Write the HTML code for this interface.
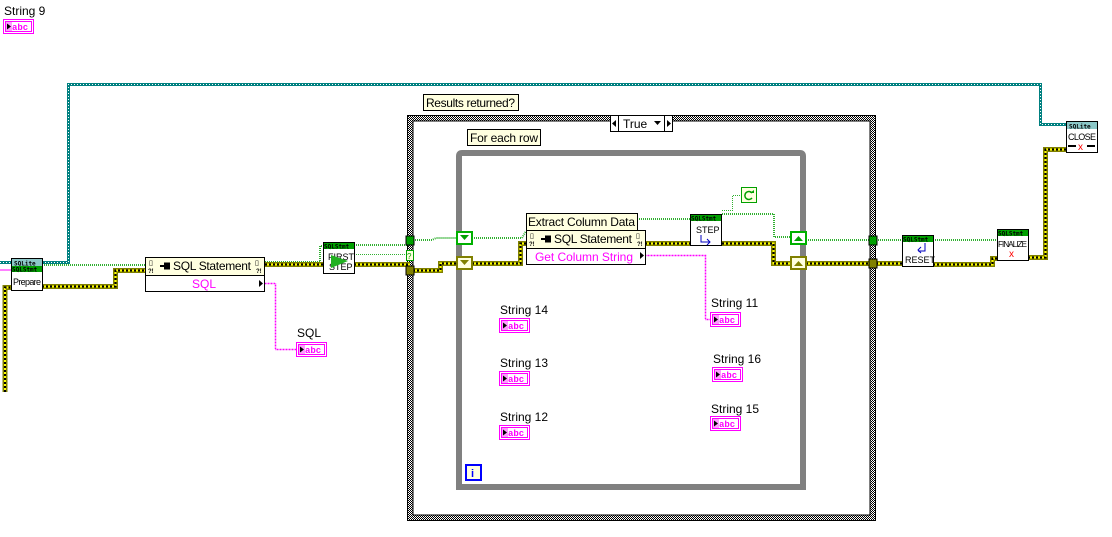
<!DOCTYPE html>
<html><head><meta charset="utf-8"><style>
html,body{margin:0;padding:0;background:#fff;width:1112px;height:537px;overflow:hidden}
svg{display:block;font-family:"Liberation Sans","DejaVu Sans",sans-serif}
.t{font-size:12px;fill:#000}
.s{font-size:6px;font-family:"DejaVu Sans Mono",monospace;font-weight:bold}
</style></head><body>
<svg width="1112" height="537" viewBox="0 0 1112 537" xmlns="http://www.w3.org/2000/svg">
<defs>
<pattern id="chk" width="2" height="2" patternUnits="userSpaceOnUse"><rect width="2" height="2" fill="#fff"/><rect width="1" height="1" fill="#000"/><rect x="1" y="1" width="1" height="1" fill="#000"/></pattern>
<path id="ew" d="M5 392 V287.5 H11 M42 286.5 H115.5 V270.5 H145 M265 264.5 H323 M354 264.5 H410 M413 270.5 H440.5 V263.5 H457 M472 263.5 H520.5 V243.5 H526 M645 243.5 H690 M722 243.5 H773.5 V263.5 H790 M806 263.5 H869 M876 263.5 H902 M933 264.5 H992.5 V258.5 H997 M1028 257.5 H1045.5 V149.5 H1066"/>
<path id="tw" d="M0 262.5 H68.5 V84.5 H1040.5 V124.5 H1068"/>
</defs>

<!-- Case structure -->
<rect x="407" y="115" width="469" height="406" fill="url(#chk)"/>
<rect x="407.5" y="115.5" width="468" height="405" fill="none" stroke="#000"/>
<rect x="413" y="121" width="457" height="394" fill="#fff" stroke="#000"/>
<rect x="610.5" y="115.5" width="62" height="16" fill="#fff" stroke="#000"/>
<line x1="618.5" y1="116" x2="618.5" y2="131" stroke="#000"/><line x1="664.5" y1="116" x2="664.5" y2="131" stroke="#000"/>
<path d="M616 120 L612 123.5 L616 127Z M667 120 L671 123.5 L667 127Z M654 121 h7 l-3.5 4z"/>
<text class="t" x="623" y="128">True</text>
<rect x="423.5" y="94.5" width="95" height="16" fill="#ffffe0" stroke="#000"/>
<text class="t" x="426" y="107" textLength="89">Results returned?</text>

<!-- While loop -->
<path d="M459 490 V156 Q459 153 462 153 H800 Q803 153 803 156 V487" fill="none" stroke="#808080" stroke-width="6"/>
<path d="M459 487 H806" stroke="#808080" stroke-width="6"/>
<rect x="467.5" y="129.5" width="73" height="16" fill="#ffffe0" stroke="#000"/>
<text class="t" x="470" y="142" textLength="68">For each row</text>
<rect x="466" y="465" width="15" height="15" fill="#ffffe0" stroke="#0000ff" stroke-width="2"/>
<text x="471" y="477" font-size="11" font-weight="bold" fill="#0000ff">i</text>

<!-- teal wire -->
<g fill="none">
<use href="#tw" stroke="#008080" stroke-width="3"/>
<use href="#tw" stroke="#fff" stroke-width="1" stroke-dasharray="1 2"/>
<path d="M0 270 H11" stroke="#ff00ff" stroke-width="1"/>
<path d="M265 283.5 H275.5 V349.5 H297" stroke="#ff00ff" stroke-width="1.5" stroke-dasharray="1 0.5"/>
<path d="M645 255.5 H705.5 V319.5 H711" stroke="#ff00ff" stroke-width="1.5" stroke-dasharray="1 0.5"/>
</g>

<!-- green refnum wires -->
<g fill="none" stroke="#30b030" stroke-width="2" stroke-dasharray="1 1">
<path d="M42 265 H145"/>
<path d="M265 262 H320 V246 H323"/>
<path d="M354 245 H410"/>
<path d="M354 254.5 H406" stroke-width="1"/>
<path d="M413 240 H432 L436 238 H457"/>
<path d="M472 238 H522 L526 231"/>
<path d="M637 219 H690"/>
<path d="M722 214 H774 V237 H790"/>
<path d="M806 240 H869"/>
<path d="M876 240 H902"/>
<path d="M933 240 H997"/>
<path d="M722 210.5 H732.5 V195.5 H741" stroke-width="1"/>
</g>

<!-- yellow error wires -->
<g fill="none">
<use href="#ew" stroke="#808000" stroke-width="5"/>
<use href="#ew" stroke="#ffff00" stroke-width="2"/>
<use href="#ew" stroke="#000" stroke-width="2" stroke-dasharray="2 2"/>
</g>

<!-- String 9 -->
<text class="t" x="4" y="15">String 9</text>
<g transform="translate(3,19)"><rect x="0.5" y="0.5" width="30" height="14" fill="#fff" stroke="#f0f"/><rect x="2.5" y="2.5" width="26" height="10" fill="none" stroke="#f0f"/><rect x="3" y="3" width="6" height="9" fill="#ff9bff"/><path d="M4 4.5 L8 7.5 L4 10.5Z"/><text x="9" y="11" font-size="9" font-weight="bold" fill="#f0f" font-family="Liberation Mono,monospace">abc</text></g>

<!-- Prepare node -->
<rect x="11.5" y="258.5" width="31" height="32" fill="#fff" stroke="#000"/>
<rect x="12" y="259" width="30" height="7" fill="#8cc8c8"/>
<text class="s" x="14" y="265.5">SQLite</text>
<rect x="12" y="266" width="30" height="6" fill="#00a000"/>
<text class="s" x="12" y="271.5">SQLStmt</text>
<text x="13" y="285" font-size="9" textLength="28">Prepare</text>

<!-- SQL Statement node 1 -->
<rect x="145.5" y="257.5" width="119" height="34" fill="#fff" stroke="#000"/>
<rect x="146" y="258" width="118" height="17" fill="#ffffe0"/>
<line x1="146" y1="275.5" x2="264" y2="275.5" stroke="#000"/>
<text x="149" y="265" font-size="7">▯</text><text x="148" y="273" font-size="6" font-weight="bold">?!</text>
<text x="255" y="265" font-size="7">▯</text><text x="256" y="273" font-size="6" font-weight="bold">?!</text>
<path d="M160 266 h5 M165 263.5 h4 v5 h-4z" stroke="#000" stroke-width="2" fill="#000"/>
<text class="t" x="173" y="270" textLength="78">SQL Statement</text>
<text x="192" y="288" font-size="12" fill="#ff00ff">SQL</text>
<path d="M259 280 L263 283.5 L259 287Z"/>

<text class="t" x="297" y="337">SQL</text>
<g transform="translate(296,342)"><rect x="0.5" y="0.5" width="30" height="14" fill="#fff" stroke="#f0f"/><rect x="2.5" y="2.5" width="26" height="10" fill="none" stroke="#f0f"/><rect x="3" y="3" width="6" height="9" fill="#ff9bff"/><path d="M4 4.5 L8 7.5 L4 10.5Z"/><text x="9" y="11" font-size="9" font-weight="bold" fill="#f0f" font-family="Liberation Mono,monospace">abc</text></g>

<!-- FIRST STEP node -->
<rect x="323.5" y="242.5" width="31" height="31" fill="#fff" stroke="#000"/>
<rect x="324" y="243" width="30" height="6" fill="#00a000"/>
<text class="s" x="324" y="248.5">SQLStmt</text>
<text x="328" y="260" font-size="9">FIRST</text>
<text x="329" y="270" font-size="9">STEP</text>
<path d="M331 255 L348 261 L331 268Z" fill="#20b020"/>

<!-- tunnels -->
<rect x="406" y="236" width="8" height="9" fill="#00a000" stroke="#000"/>
<rect x="406.5" y="250.5" width="7" height="10" fill="#ffffe0" stroke="#00a000"/>
<text x="407" y="259" font-size="8" fill="#00a000">?</text>
<rect x="406" y="266" width="8" height="9" fill="#808000" stroke="#000"/>
<rect x="869" y="236" width="8" height="9" fill="#00a000" stroke="#000"/>
<rect x="869" y="259" width="8" height="9" fill="#808000" stroke="#000"/>

<!-- shift registers -->
<rect x="457" y="232" width="15" height="12" fill="#fff" stroke="#00b000" stroke-width="2"/><path d="M460 235 h9 l-4.5 5z" fill="#00a000"/>
<rect x="457" y="257" width="15" height="12" fill="#ffffe0" stroke="#808000" stroke-width="2"/><path d="M460 260 h9 l-4.5 5z" fill="#808000"/>
<rect x="791" y="232" width="15" height="12" fill="#fff" stroke="#00b000" stroke-width="2"/><path d="M794 241 h9 l-4.5 -5z" fill="#00a000"/>
<rect x="791" y="257" width="15" height="12" fill="#ffffe0" stroke="#808000" stroke-width="2"/><path d="M794 266 h9 l-4.5 -5z" fill="#808000"/>

<!-- Extract column data -->
<rect x="526.5" y="213.5" width="111" height="17" fill="#ffffe0" stroke="#000"/>
<text class="t" x="528" y="226" textLength="107">Extract Column Data</text>
<rect x="526.5" y="230.5" width="119" height="34" fill="#fff" stroke="#000"/>
<rect x="527" y="231" width="118" height="17" fill="#ffffe0"/>
<line x1="527" y1="248.5" x2="645" y2="248.5" stroke="#000"/>
<text x="530" y="238" font-size="7">▯</text><text x="529" y="246" font-size="6" font-weight="bold">?!</text>
<text x="636" y="238" font-size="7">▯</text><text x="637" y="246" font-size="6" font-weight="bold">?!</text>
<path d="M541 239 h5 M546 236.5 h4 v5 h-4z" stroke="#000" stroke-width="2" fill="#000"/>
<text class="t" x="554" y="243" textLength="78">SQL Statement</text>
<text x="535" y="261" font-size="12" fill="#ff00ff" textLength="98">Get Column String</text>
<path d="M640 252 L644 255.5 L640 259Z"/>

<!-- STEP node -->
<rect x="690.5" y="214.5" width="31" height="31" fill="#fff" stroke="#000"/>
<rect x="691" y="215" width="30" height="6" fill="#00a000"/>
<text class="s" x="691" y="220.5">SQLStmt</text>
<text x="696" y="233" font-size="9">STEP</text>
<path d="M701 235 V242 H710 M707 239 L710 242 L707 245" fill="none" stroke="#0000c0"/>
<rect x="741.5" y="187.5" width="15" height="15" fill="#ffffe0" stroke="#00a000"/>
<path d="M752 193 A4 4 0 1 0 752 198" fill="none" stroke="#00a000" stroke-width="1.5"/><path d="M750 193 h4 v-3z" fill="#00a000"/>

<!-- strings -->
<g font-size="12">
<text x="500" y="314">String 14</text>
<text x="500" y="367">String 13</text>
<text x="500" y="421">String 12</text>
<text x="711" y="307">String 11</text>
<text x="713" y="363">String 16</text>
<text x="711" y="413">String 15</text>
</g>
<g transform="translate(499,318)"><rect x="0.5" y="0.5" width="30" height="14" fill="#fff" stroke="#f0f"/><rect x="2.5" y="2.5" width="26" height="10" fill="none" stroke="#f0f"/><rect x="3" y="3" width="6" height="9" fill="#ff9bff"/><path d="M4 4.5 L8 7.5 L4 10.5Z"/><text x="9" y="11" font-size="9" font-weight="bold" fill="#f0f" font-family="Liberation Mono,monospace">abc</text></g>
<g transform="translate(499,371)"><rect x="0.5" y="0.5" width="30" height="14" fill="#fff" stroke="#f0f"/><rect x="2.5" y="2.5" width="26" height="10" fill="none" stroke="#f0f"/><rect x="3" y="3" width="6" height="9" fill="#ff9bff"/><path d="M4 4.5 L8 7.5 L4 10.5Z"/><text x="9" y="11" font-size="9" font-weight="bold" fill="#f0f" font-family="Liberation Mono,monospace">abc</text></g>
<g transform="translate(499,425)"><rect x="0.5" y="0.5" width="30" height="14" fill="#fff" stroke="#f0f"/><rect x="2.5" y="2.5" width="26" height="10" fill="none" stroke="#f0f"/><rect x="3" y="3" width="6" height="9" fill="#ff9bff"/><path d="M4 4.5 L8 7.5 L4 10.5Z"/><text x="9" y="11" font-size="9" font-weight="bold" fill="#f0f" font-family="Liberation Mono,monospace">abc</text></g>
<g transform="translate(710,312)"><rect x="0.5" y="0.5" width="30" height="14" fill="#fff" stroke="#f0f"/><rect x="2.5" y="2.5" width="26" height="10" fill="none" stroke="#f0f"/><rect x="3" y="3" width="6" height="9" fill="#ff9bff"/><path d="M4 4.5 L8 7.5 L4 10.5Z"/><text x="9" y="11" font-size="9" font-weight="bold" fill="#f0f" font-family="Liberation Mono,monospace">abc</text></g>
<g transform="translate(712,367)"><rect x="0.5" y="0.5" width="30" height="14" fill="#fff" stroke="#f0f"/><rect x="2.5" y="2.5" width="26" height="10" fill="none" stroke="#f0f"/><rect x="3" y="3" width="6" height="9" fill="#ff9bff"/><path d="M4 4.5 L8 7.5 L4 10.5Z"/><text x="9" y="11" font-size="9" font-weight="bold" fill="#f0f" font-family="Liberation Mono,monospace">abc</text></g>
<g transform="translate(710,416)"><rect x="0.5" y="0.5" width="30" height="14" fill="#fff" stroke="#f0f"/><rect x="2.5" y="2.5" width="26" height="10" fill="none" stroke="#f0f"/><rect x="3" y="3" width="6" height="9" fill="#ff9bff"/><path d="M4 4.5 L8 7.5 L4 10.5Z"/><text x="9" y="11" font-size="9" font-weight="bold" fill="#f0f" font-family="Liberation Mono,monospace">abc</text></g>

<!-- RESET -->
<rect x="902.5" y="235.5" width="31" height="31" fill="#fff" stroke="#000"/>
<rect x="903" y="236" width="30" height="6" fill="#00a000"/>
<text class="s" x="903" y="241.5">SQLStmt</text>
<path d="M925 245 V253 H918 M921 249 L918 252 L921 255" fill="none" stroke="#0000c0" transform="translate(0,-2)"/>
<text x="905" y="263" font-size="9">RESET</text>

<!-- FINALIZE -->
<rect x="997.5" y="229.5" width="31" height="31" fill="#fff" stroke="#000"/>
<rect x="998" y="230" width="30" height="6" fill="#00a000"/>
<text class="s" x="998" y="235.5">SQLStmt</text>
<text x="998" y="247" font-size="8" textLength="29">FINALIZE</text>
<text x="1009" y="257" font-size="10" fill="#ff0000">x</text>

<!-- CLOSE -->
<rect x="1066.5" y="121.5" width="31" height="31" fill="#fff" stroke="#000"/>
<rect x="1067" y="122" width="30" height="7" fill="#8cc8c8"/>
<text class="s" x="1069" y="128.5">SQLite</text>
<text x="1068" y="140" font-size="9" textLength="28">CLOSE</text>
<path d="M1068 146 h8 M1087 146 h8" stroke="#000" stroke-width="2"/>
<text x="1078" y="150" font-size="10" fill="#ff0000">x</text>
</svg>
</body></html>
